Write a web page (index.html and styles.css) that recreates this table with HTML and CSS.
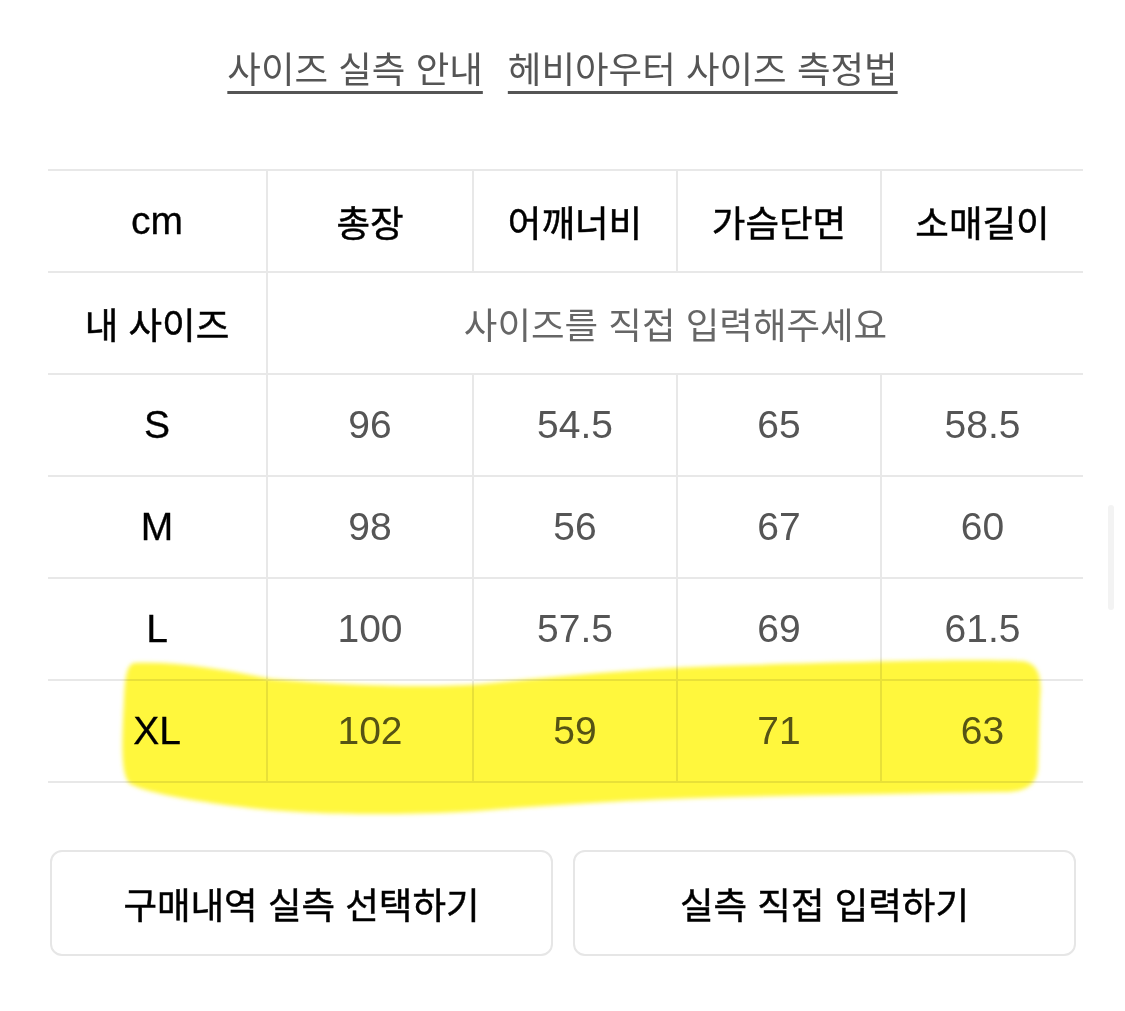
FILE: index.html
```html
<!DOCTYPE html>
<html lang="ko">
<head>
<meta charset="utf-8">
<title>사이즈 실측</title>
<link rel="stylesheet" href="styles.css">
</head>
<body>
<div class="page">
  <nav class="links">
    <a class="link" href="#">사이즈 실측 안내</a>
    <a class="link" href="#">헤비아우터 사이즈 측정법</a>
  </nav>

  <table class="size-table">
    <colgroup>
      <col class="c0"><col class="c1"><col class="c2"><col class="c3"><col class="c4">
    </colgroup>
    <thead>
      <tr>
        <th class="lat first">cm</th>
        <th>총장</th>
        <th>어깨너비</th>
        <th>가슴단면</th>
        <th>소매길이</th>
      </tr>
    </thead>
    <tbody>
      <tr>
        <th class="first">내 사이즈</th>
        <td colspan="4" class="placeholder">사이즈를 직접 입력해주세요</td>
      </tr>
      <tr>
        <th class="lat first">S</th><td>96</td><td>54.5</td><td>65</td><td>58.5</td>
      </tr>
      <tr>
        <th class="lat first">M</th><td>98</td><td>56</td><td>67</td><td>60</td>
      </tr>
      <tr>
        <th class="lat first">L</th><td>100</td><td>57.5</td><td>69</td><td>61.5</td>
      </tr>
      <tr>
        <th class="lat first">XL</th><td>102</td><td>59</td><td>71</td><td>63</td>
      </tr>
    </tbody>
  </table>

  <div class="actions">
    <button class="btn" type="button">구매내역 실측 선택하기</button>
    <button class="btn" type="button">실측 직접 입력하기</button>
  </div>

  <svg class="highlight" width="1125" height="1011" viewBox="0 0 1125 1011" aria-hidden="true">
    <defs>
      <filter id="soft" x="-5%" y="-20%" width="110%" height="140%">
        <feGaussianBlur stdDeviation="2.2"/>
      </filter>
    </defs>
    <path filter="url(#soft)" fill="#fff73e" d="M 134 663 C 180 661, 230 671, 272 679 C 350 686, 430 688, 482 684 C 560 676, 650 668, 720 666 C 850 662, 960 659, 1022 661 C 1040 663, 1042 680, 1040 700 L 1038 768 C 1036 788, 1022 792, 1002 792 C 900 794, 800 795, 700 798 C 600 801, 520 808, 460 812 C 380 816, 300 814, 250 808 C 200 802, 150 794, 130 784 C 120 774, 122 740, 124 700 C 125 680, 126 665, 134 663 Z"/>
  </svg>

  <div class="scrollbar"></div>
</div>
</body>
</html>
```

FILE: styles.css
```css
html, body {
  margin: 0;
  padding: 0;
  background: #ffffff;
}

body {
  font-family: "Liberation Sans", "Noto Sans CJK KR", sans-serif;
  color: #111111;
}

.page {
  position: relative;
  width: 1125px;
  height: 1011px;
  overflow: hidden;
}

.links {
  display: flex;
  justify-content: center;
  gap: 25px;
  padding-top: 41px;
  height: 53px;
  font-family: "Noto Sans CJK KR", sans-serif;
  font-size: 36.5px;
  line-height: 53px;
}

.link {
  color: #555555;
  text-decoration: underline;
  text-decoration-thickness: 3px;
  text-underline-offset: 8px;
  text-decoration-color: #555555;
}

.size-table {
  margin: 75px 0 0 48px;
  width: 1035px;
  table-layout: fixed;
  border-collapse: separate;
  border-spacing: 0;
  border-top: 2px solid #e8e8e8;
}

.c0 { width: 218px; }
.c1 { width: 206px; }
.c2 { width: 204px; }
.c3 { width: 204px; }
.c4 { width: 203px; }

.size-table th,
.size-table td {
  height: 100px;
  padding: 0;
  text-align: center;
  vertical-align: middle;
  border-bottom: 2px solid #e8e8e8;
  border-left: 2px solid #e8e8e8;
}

.size-table .first {
  border-left: none;
}

.size-table th {
  font-family: "Noto Sans CJK KR", sans-serif;
  font-size: 36.5px;
  font-weight: 400;
  color: #000000;
  -webkit-text-stroke: 0.5px #000000;
}

.size-table th.lat {
  font-family: "Liberation Sans", "Noto Sans CJK KR", sans-serif;
  font-size: 39px;
  font-weight: 400;
  -webkit-text-stroke: 0.3px #000000;
}

.size-table td {
  font-family: "Liberation Sans", sans-serif;
  font-size: 39px;
  color: #555555;
}

.size-table td.placeholder {
  font-family: "Noto Sans CJK KR", sans-serif;
  font-size: 36.5px;
  color: #666666;
}

.actions {
  display: grid;
  grid-template-columns: 1fr 1fr;
  gap: 20px;
  width: 1026px;
  margin: 67px 0 0 50px;
}

.btn {
  height: 106px;
  background: #ffffff;
  border: 2px solid #e6e6e6;
  border-radius: 12px;
  font-family: "Noto Sans CJK KR", sans-serif;
  font-size: 36.5px;
  font-weight: 400;
  color: #000000;
  -webkit-text-stroke: 0.5px #000000;
  padding: 0;
}

.highlight {
  position: absolute;
  left: 0;
  top: 0;
  pointer-events: none;
  mix-blend-mode: multiply;
}

.scrollbar {
  position: absolute;
  left: 1108px;
  top: 505px;
  width: 6px;
  height: 105px;
  border-radius: 3px;
  background: #f3f3f3;
}
```
